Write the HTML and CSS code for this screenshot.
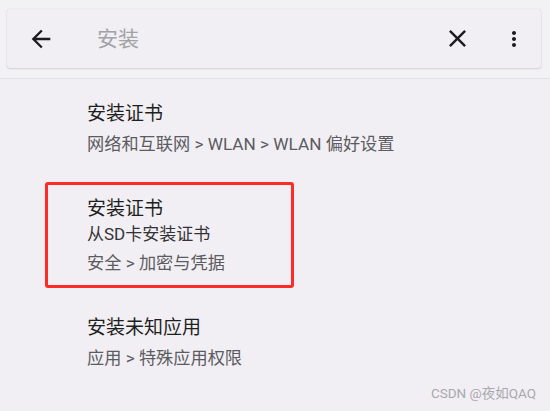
FILE: index.html
```html
<!DOCTYPE html>
<html lang="zh-CN">
<head>
<meta charset="utf-8">
<link rel="stylesheet" href="styles.css">
</head>
<body>
<div class="page">
  <header class="header">
    <div class="search-card">
      <svg class="icon icon-back" viewBox="0 0 24 24"><path d="M20 11H7.83l5.59-5.59L12 4l-8 8 8 8 1.41-1.41L7.83 13H20v-2z"/></svg>
      <div class="query">安装</div>
      <svg class="icon icon-close" viewBox="0 0 24 24"><path d="M19 6.41L17.59 5 12 10.59 6.41 5 5 6.41 10.59 12 5 17.59 6.41 19 12 13.41 17.59 19 19 17.59 13.41 12z"/></svg>
      <svg class="icon icon-more" viewBox="0 0 24 24"><path d="M12 8c1.1 0 2-.9 2-2s-.9-2-2-2-2 .9-2 2 .9 2 2 2zm0 2c-1.1 0-2 .9-2 2s.9 2 2 2 2-.9 2-2-.9-2-2-2zm0 6c-1.1 0-2 .9-2 2s.9 2 2 2 2-.9 2-2-.9-2-2-2z"/></svg>
    </div>
  </header>
  <main class="results">
    <div class="item">
      <div class="title">安装证书</div>
      <div class="path">网络和互联网 &gt; WLAN &gt; WLAN 偏好设置</div>
    </div>
    <div class="item item-marked">
      <div class="title">安装证书</div>
      <div class="summary">从SD卡安装证书</div>
      <div class="path">安全 &gt; 加密与凭据</div>
    </div>
    <div class="item">
      <div class="title">安装未知应用</div>
      <div class="path">应用 &gt; 特殊应用权限</div>
    </div>
  </main>
  <div class="watermark">CSDN @夜如QAQ</div>
</div>
</body>
</html>
```

FILE: styles.css
```css
* { box-sizing: border-box; }
html, body {
  margin: 0;
  padding: 0;
  background: #f1eff4;
  font-family: Roboto, "Noto Sans CJK SC", sans-serif;
}
.page {
  position: relative;
  width: 550px;
  height: 411px;
  overflow: hidden;
}
.header {
  height: 79px;
  background: #f2f1f3;
  border-bottom: 1px solid #e1e0e3;
  padding: 9px 9px 0 7px;
}
.search-card {
  height: 59px;
  background: #f1eff4;
  border-radius: 3px;
  box-shadow: 0 0 1px rgba(0,0,0,0.18), 0 1px 2px rgba(0,0,0,0.12);
  display: flex;
  align-items: center;
  padding: 0 15px 0 20px;
}
.icon { fill: #1c1b1f; flex: none; }
.icon-back { width: 28px; height: 28px; }
.query {
  flex: 1;
  margin-left: 42px;
  font-size: 21px;
  color: #a3a2a6;
  line-height: 28px;
}
.icon-close { width: 29px; height: 29px; margin-right: 30px; }
.icon-more { width: 24px; height: 24px; }

.results {
  padding: 8px 0 0 45px;
}
.item {
  border: 3px solid transparent;
  padding: 11px 0 10px 39px;
  margin-bottom: 13px;
}
.item-marked {
  width: 249px;
  border-color: #ff2b26;
  border-radius: 3px;
}
.title {
  font-size: 19px;
  line-height: 26px;
  color: #1f1f22;
}
.summary {
  font-size: 17px;
  line-height: 24px;
  color: #333236;
}
.path {
  font-size: 17.2px;
  line-height: 24px;
  color: #5c5b60;
  margin-top: 5px;
}
.watermark {
  position: absolute;
  right: 14px;
  bottom: 9px;
  font-family: Roboto, "Noto Sans CJK SC", sans-serif;
  font-size: 13.5px;
  color: #a9a8ac;
}
```
